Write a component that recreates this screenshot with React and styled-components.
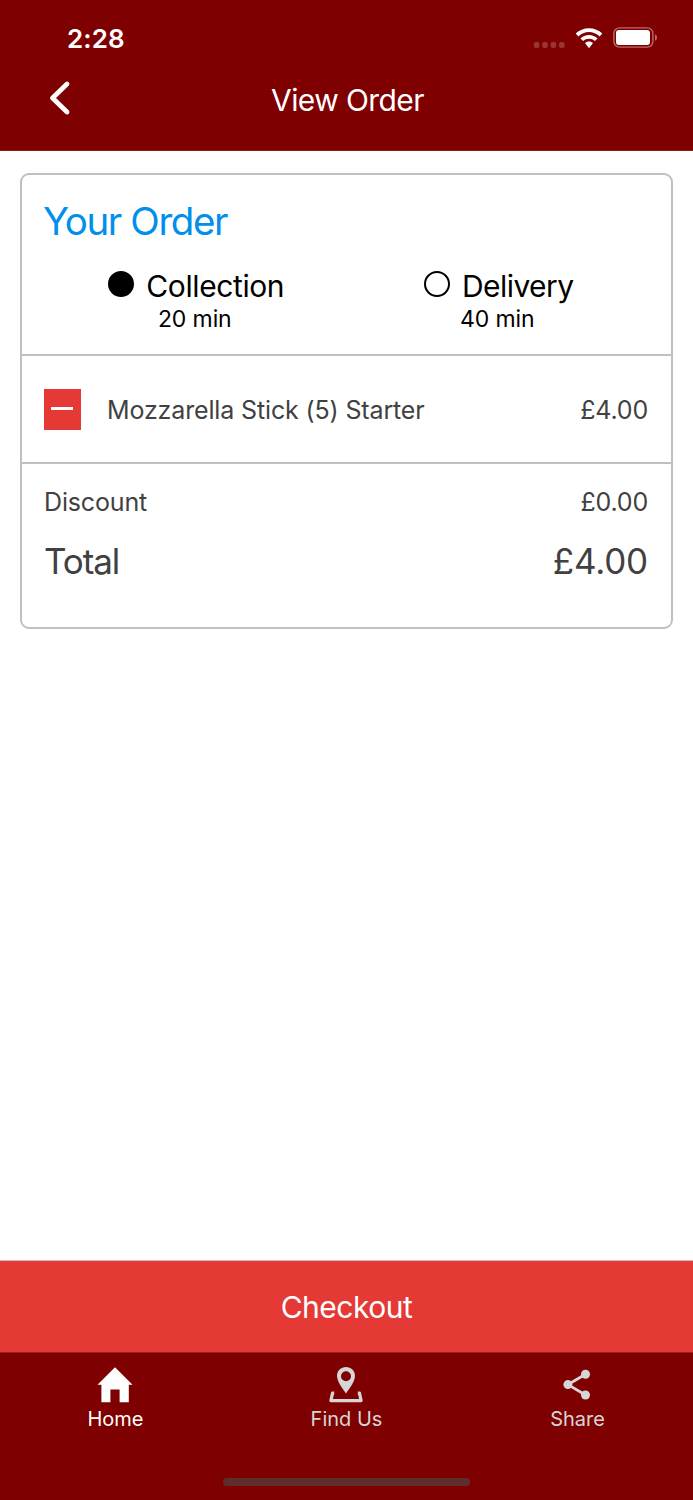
import React from "react";
import styled, { createGlobalStyle } from "styled-components";

const tabs = [
  { id: "home", label: "Home", active: true },
  { id: "find", label: "Find Us" },
  { id: "share", label: "Share" },
];

const WifiIcon = () => (
  <svg width="28" height="21" viewBox="0 0 28 21" fill="#fff">
    <path d="M14 0.300c5.100 0 9.800 2 13.300 5.300l-2.700 2.800c-2.800-2.700-6.600-4.300-10.600-4.300s-7.800 1.600-10.600 4.300L0.700 5.600C4.200 2.300 8.900 0.300 14 0.300z" />
    <path d="M14 6.900c3.300 0 6.300 1.300 8.600 3.500l-2.800 2.700c-1.500-1.500-3.500-2.300-5.800-2.300s-4.300 0.800-5.800 2.300l-2.800-2.700c2.300-2.200 5.300-3.500 8.600-3.500z" />
    <path d="M14 13.600c1.500 0 2.900 0.600 4 1.500l-4 5.200-4-5.200c1.100-0.900 2.500-1.500 4-1.500z" />
  </svg>
);

const BatteryIcon = () => (
  <svg width="46" height="22" viewBox="0 0 46 22">
    <rect x="0.900" y="0.900" width="39" height="19.200" rx="5.500" fill="none" stroke="#b96b6b" strokeWidth="1.400" />
    <rect x="3" y="3" width="34" height="15" rx="3" fill="#fff" />
    <path d="M42 7.200c1.300 0.500 2 1.800 2 3.300s-0.700 2.800-2 3.300z" fill="#b96b6b" />
  </svg>
);

const SignalDots = () => (
  <svg width="32" height="8" viewBox="0 0 32 8" fill="#9b3535">
    {[0, 8.4, 16.8, 25.2].map((x) => (
      <rect key={x} x={x + 0.8} y="1" width="5.600" height="6" rx="2" />
    ))}
  </svg>
);

const BackIcon = () => (
  <svg width="22" height="36" viewBox="0 0 22 36">
    <path d="M18 4L3.500 18L18 32" fill="none" stroke="#fff" strokeWidth="4.800" strokeLinecap="round" strokeLinejoin="round" />
  </svg>
);

const icons = {
  home: (
    <svg width="36" height="36" viewBox="0 0 36 36" fill="#fff">
      <path d="M18 0.300L35.500 17.800h-3.700v17.500H22.600V22.400h-9.200v12.900H4.400V17.800H0.500z" />
    </svg>
  ),
  find: (
    <svg width="36" height="36" viewBox="0 0 36 36">
      <path
        fill="#d6d6d6"
        fillRule="evenodd"
        d="M18 0c5 0 9 3.800 9 8.800C27 14 22.500 20.500 18 26.400C13.500 20.500 9 14 9 8.800C9 3.800 13 0 18 0zM18 4.200a5 5 0 1 0 0 10a5 5 0 1 0 0-10z"
      />
      <path
        d="M6.200 26.200H4.500L2.900 33.600H33.100L31.500 26.200H29.800"
        fill="none"
        stroke="#d6d6d6"
        strokeWidth="3.200"
        strokeLinejoin="round"
      />
    </svg>
  ),
  share: (
    <svg width="36" height="36" viewBox="0 0 36 36" fill="#d6d6d6">
      <path d="M26.500 7.300L9 17.600L26.500 28" fill="none" stroke="#d6d6d6" strokeWidth="2.800" />
      <circle cx="26.500" cy="7.300" r="4.500" />
      <circle cx="8.900" cy="17.600" r="4.500" />
      <circle cx="26.500" cy="28" r="4.500" />
    </svg>
  ),
};

const App = () => {
  return (
    <Screen>
      <GlobalStyle />
      <Header>
        <StatusBar>
          <Clock>2:28</Clock>
          <StatusIcons>
            <SignalDots />
            <WifiIcon />
            <BatteryIcon />
          </StatusIcons>
        </StatusBar>
        <TitleBar>
          <BackButton aria-label="Back">
            <BackIcon />
          </BackButton>
          <Title>View Order</Title>
        </TitleBar>
      </Header>
      <Content>
        <Card>
          <OrderHead>
            <Heading>Your Order</Heading>
            <Options>
              <Option>
                <OptionLabel $spacing={-0.4}>
                  <Radio $checked />
                  Collection
                </OptionLabel>
                <OptionTime>20 min</OptionTime>
              </Option>
              <Option>
                <OptionLabel $spacing={-0.55}>
                  <Radio />
                  Delivery
                </OptionLabel>
                <OptionTime>40 min</OptionTime>
              </Option>
            </Options>
          </OrderHead>
          <ItemRow>
            <RemoveButton aria-label="Remove item">
              <Minus />
            </RemoveButton>
            <ItemName>Mozzarella Stick (5) Starter</ItemName>
            <Price>£4.00</Price>
          </ItemRow>
          <Summary>
            <SummaryRow>
              <span>Discount</span>
              <Price>£0.00</Price>
            </SummaryRow>
            <TotalRow>
              <TotalLabel>Total</TotalLabel>
              <TotalPrice>£4.00</TotalPrice>
            </TotalRow>
          </Summary>
        </Card>
      </Content>
      <Checkout>Checkout</Checkout>
      <TabBar>
        <Tabs>
          {tabs.map(({ id, label, active }) => (
            <Tab key={id} $active={active}>
              {icons[id]}
              <span>{label}</span>
            </Tab>
          ))}
        </Tabs>
        <HomeIndicator />
      </TabBar>
    </Screen>
  );
};

const GlobalStyle = createGlobalStyle`
  *,
  *::before,
  *::after {
    box-sizing: border-box;
  }
  body {
    margin: 0;
    background: #fff;
    font-family: Inter, "Liberation Sans", sans-serif;
  }
  button {
    border: 0;
    padding: 0;
    font: inherit;
    color: inherit;
  }
  svg {
    display: block;
    flex: none;
  }
`;

const Screen = styled.div`
  display: flex;
  flex-direction: column;
  height: 1500px;
  overflow: hidden;
`;

const Header = styled.header`
  height: 151px;
  background: #7f0000;
  border-bottom: 1px solid #8b1a1d;
  color: #fff;
`;

const StatusBar = styled.div`
  display: flex;
  justify-content: space-between;
  align-items: center;
  height: 76px;
  padding: 0 34px 0 67px;
`;

const Clock = styled.span`
  padding-top: 1px;
  font-size: 26px;
  font-weight: 600;
  line-height: 32px;
  letter-spacing: 0.1px;
`;

const StatusIcons = styled.div`
  display: flex;
  align-items: center;
  gap: 10px;

  svg:first-child {
    margin-top: 13px;
  }
`;

const TitleBar = styled.div`
  display: grid;
  grid-template-columns: 100px 1fr 100px;
  align-items: center;
  height: 48px;
`;

const BackButton = styled.button`
  justify-self: start;
  margin-left: 49px;
  margin-top: -4px;
  background: none;
`;

const Title = styled.h1`
  margin: 0;
  padding-left: 2px;
  font-size: 30px;
  font-weight: 400;
  line-height: 48px;
  letter-spacing: -0.6px;
  text-align: center;
`;

const Content = styled.main`
  flex: 1;
  padding: 22px 20px 0;
`;

const Card = styled.section`
  height: 456px;
  border: 2px solid #c0c0c0;
  border-radius: 9px;
  color: #414141;
`;

const OrderHead = styled.div`
  height: 181px;
  padding-top: 22px;
  border-bottom: 2px solid #c0c0c0;
`;

const Heading = styled.h2`
  margin: 0 0 0 21px;
  font-size: 38.5px;
  font-weight: 400;
  line-height: 48px;
  letter-spacing: -1.4px;
  color: #0090eb;
`;

const Options = styled.div`
  display: flex;
  margin-top: 23px;
  padding: 0 21px 0 23px;
  color: #000;
`;

const Option = styled.div`
  flex: 1;
  display: flex;
  flex-direction: column;
  align-items: center;
`;

const OptionLabel = styled.div`
  display: flex;
  align-items: center;
  font-size: 30px;
  line-height: 36px;
  letter-spacing: ${({ $spacing }) => $spacing}px;
`;

const Radio = styled.span`
  width: 26px;
  height: 26px;
  margin: -4px 12px 0 0;
  border: 2px solid #000;
  border-radius: 50%;
  background: ${({ $checked }) => ($checked ? "#000" : "transparent")};
`;

const OptionTime = styled.div`
  padding-right: 3px;
  font-size: 23px;
  line-height: 30px;
  letter-spacing: -0.1px;
`;

const ItemRow = styled.div`
  display: flex;
  align-items: center;
  height: 108px;
  padding: 1px 23px 0 22px;
  border-bottom: 2px solid #c0c0c0;
  font-size: 25px;
`;

const RemoveButton = styled.button`
  display: flex;
  align-items: flex-start;
  width: 37px;
  height: 41px;
  padding: 18px 0 0 7px;
  background: #e53935;
`;

const Minus = styled.span`
  width: 22px;
  height: 3px;
  background: #fff;
`;

const ItemName = styled.span`
  flex: 1;
  margin-left: 26px;
  letter-spacing: -0.14px;
  white-space: nowrap;
`;

const Price = styled.span`
  letter-spacing: -0.2px;
`;

const Summary = styled.div`
  padding: 21px 23px 0 22px;
`;

const SummaryRow = styled.div`
  display: flex;
  justify-content: space-between;
  font-size: 25px;
  line-height: 35px;
  letter-spacing: -0.15px;
`;

const TotalRow = styled(SummaryRow)`
  margin-top: 17px;
  font-size: 35px;
  line-height: 48px;
`;

const TotalLabel = styled.span`
  letter-spacing: -1.1px;
`;

const TotalPrice = styled.span`
  letter-spacing: -0.2px;
`;

const Checkout = styled.button`
  height: 92px;
  border-top: 1px solid #d9b9b9;
  background: #e53935;
  color: #fff;
  font-size: 30px;
  letter-spacing: -0.5px;
`;

const TabBar = styled.nav`
  display: flex;
  flex-direction: column;
  height: 148px;
  padding-top: 14px;
  border-top: 1px solid #a31b1a;
  background: #7f0000;
`;

const Tabs = styled.div`
  display: flex;
  height: 100px;
`;

const Tab = styled.a`
  flex: 1;
  display: flex;
  flex-direction: column;
  align-items: center;
  gap: 3px;
  color: ${({ $active }) => ($active ? "#fff" : "#d6d6d6")};
  font-size: 20px;
  line-height: 26px;
  letter-spacing: 0;

  svg {
    margin-right: 2px;
  }
`;

const HomeIndicator = styled.div`
  width: 247px;
  height: 8px;
  margin: 11px auto 0;
  border-radius: 4px;
  background: #5e2d2d;
`;

export default App;
